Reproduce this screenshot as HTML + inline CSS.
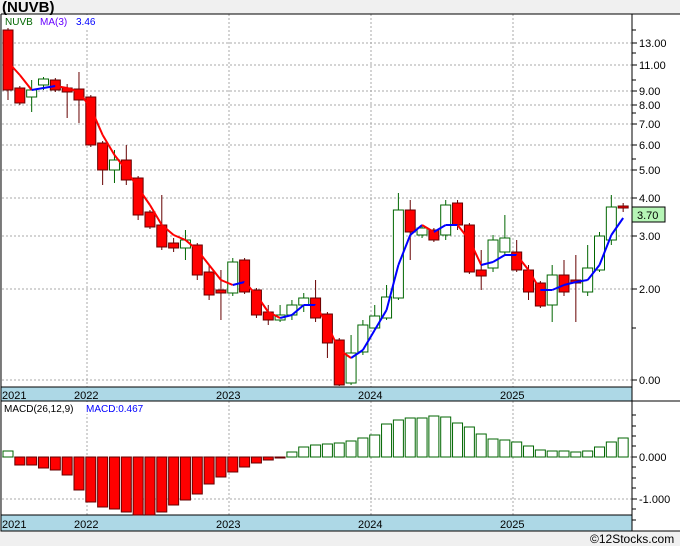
<!DOCTYPE html>
<html><head><style>
body{margin:0;background:#f0f0f0;width:680px;height:546px;overflow:hidden;font-family:"Liberation Sans",sans-serif}
svg{display:block}
</style></head><body>
<svg id="s" width="680" height="546" xmlns="http://www.w3.org/2000/svg" font-family="Liberation Sans, sans-serif">
<rect x="0" y="0" width="680" height="546" fill="#f0f0f0"/>
<rect x="1" y="14" width="679" height="517" fill="#fff"/>
<text x="2" y="12" font-size="15" font-weight="bold" fill="#000">(NUVB)</text>
<text x="590" y="543" font-size="12" fill="#000">©12Stocks.com</text>
<g id="g"></g>
</svg>
<script>
const g=document.getElementById('g');let h='';
const L=(x1,y1,x2,y2,c,w,d)=>h+=`<line x1="${x1}" y1="${y1}" x2="${x2}" y2="${y2}" stroke="${c}" stroke-width="${w||1}" ${d?'stroke-dasharray="'+d+'"':''}/>`;
const T=(x,y,t,c,s)=>h+=`<text x="${x}" y="${y}" font-size="${s||11}" fill="${c||'#000'}">${t}</text>`;
[[43,'13.00'],[65,'11.00'],[91,'9.00'],[105,'8.00'],[124,'7.00'],[145,'6.00'],[170,'5.00'],[198,'4.00'],[236,'3.00'],[289,'2.00'],[380,'0.00']].forEach(([y,t])=>{L(2,y,632,y,'#aaa',1,'2,2');L(632,y,637,y,'#000');T(639,y+4,t);});
[30,53,80,113,159,328].forEach(y=>L(632,y,636,y,'#000'));
[87,229,371,513].forEach(x=>{L(x,14,x,387,'#aaa',1,'2,2');L(x,401,x,515,'#aaa',1,'2,2');});
[[457,'0.000'],[499,'-1.000']].forEach(([y,t])=>{L(2,y,632,y,'#aaa',1,'2,2');L(632,y,637,y,'#000');T(639,y+4,t);});
[415,426,436,446,467,478,488,509,520].forEach(y=>L(632,y,636,y,'#000'));
h+=`<rect x="1" y="387" width="631" height="14" fill="#add8e6" stroke="#000"/><rect x="1" y="515" width="631" height="16" fill="#add8e6" stroke="#000"/>`;
[[2,'2021'],[87,'2022'],[229,'2023'],[371,'2024'],[513,'2025']].forEach(([x,t])=>{T(x-13+(x<10?13:0),399,t);T(x-13+(x<10?13:0),528,t);});
L(632,14,632,531,'#000');L(1,14,680,14,'#000');L(1,14,1,531,'#000');L(1,531,680,531,'#000');L(1,401,680,401,'#000');
const C=[['r',30,90,28,100],['r',88,103,86,105],['g',90,97,80,112],['g',79,85,77,90],['r',80,90,78,92],['r',88,92,84,118],['r',89,100,72,123],['r',97,145,95,147],['r',143,170,141,185],['g',160,170,150,183],['r',160,180,145,185],['r',178,215,176,220],['r',212,227,210,229],['r',225,247,195,250],['r',243,248,238,252],['g',240,248,230,260],['r',245,275,243,280],['r',272,295,265,300],['r',290,293,270,320],['g',262,293,258,296],['r',260,292,258,294],['r',290,315,288,318],['r',312,320,305,325],['g',315,320,305,322],['g',305,315,300,320],['g',298,305,293,312],['r',298,318,280,322],['r',314,343,312,358],['r',340,385,338,386],['g',353,383,335,385],['g',325,352,320,355],['g',316,328,305,330],['g',297,318,285,320],['g',210,298,193,300],['r',210,232,200,260],['g',228,235,225,238],['r',230,240,228,242],['g',205,235,200,240],['r',203,225,200,230],['r',225,272,223,274],['r',270,276,250,290],['g',240,268,235,272],['g',238,252,215,255],['r',252,270,240,272],['r',270,292,265,300],['r',283,306,281,308],['g',275,305,265,322],['r',275,292,260,296],['r',280,283,255,322],['g',268,292,245,296],['g',236,270,232,272],['g',207,240,195,245],['r',206,208,203,212]];
const X=i=>8+11.83*i;
C.forEach((c,i)=>{const x=X(i);const col=c[0]=='r'?'#600':'#060';L(x,c[3],x,c[4],col);
 h+=`<rect x="${x-5}" y="${c[1]}" width="10" height="${Math.max(1,c[2]-c[1])}" fill="${c[0]=='r'?'#f00':'#fff'}" stroke="${c[0]=='r'?'#600':'#060'}"/>`;});
const M=[62,75,90,88,86,88,92,108,135,155,170,188,205,225,235,240,250,265,280,285,282,295,312,318,315,305,305,325,350,358,350,330,310,265,235,225,232,225,225,240,265,262,255,255,270,290,290,285,282,280,265,235,218];
for(let i=0;i<M.length-1;i++)L(X(i),M[i],X(i+1),M[i+1],M[i+1]>M[i]?'#f00':'#00f',2);
const D=[451,465,465,468,470,475,490,502,507,509,512,515,515,512,505,500,494,484,477,472,467,463,460,458,452,447,445,444,443,441,438,435,424,420,418,418,416,417,423,427,434,439,440,442,446,450,451,451,452,451,447,442,438];
D.forEach((d,i)=>{const x=X(i);const up=d<457;h+=`<rect x="${x-5}" y="${Math.min(d,457)}" width="10" height="${Math.abs(d-457)}" fill="${up?'#fff':'#f00'}" stroke="${up?'#060':'#600'}"/>`;});
h+=`<rect x="632" y="207" width="33" height="15" fill="#b6f5b6" stroke="#000"/>`;T(637,219,'3.70');
h+=`<rect x="2" y="15" width="130" height="13" fill="#fff"/>`;
T(5,25,'NUVB','#060',10);T(40,25,'MA(3)','#60f',10);T(76,25,'3.46','#00f',10);
h+=`<rect x="2" y="402" width="160" height="12" fill="#fff"/>`;T(4,412,'MACD(26,12,9)','#000',10);T(86,412,'MACD:0.467','#00f',10);
g.innerHTML=h;
</script>
</body></html>
